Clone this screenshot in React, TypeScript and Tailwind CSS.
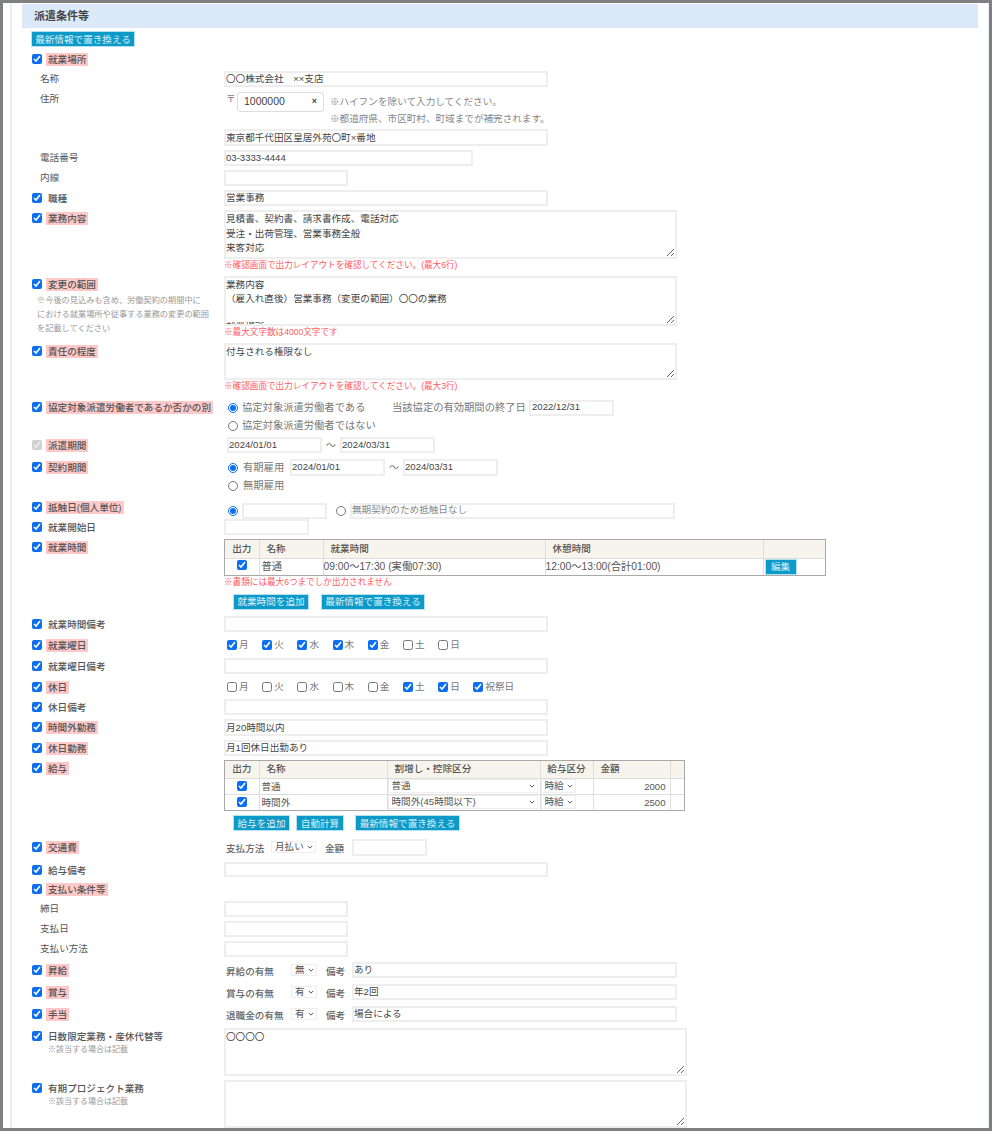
import React from "react";

const inputBase =
  "block border-2 border-[#eeeeee] bg-white px-0 text-[9.6px] text-[#444444] outline-none";
const redNote = "text-[8.6px] leading-[12px] text-[#ff5a5f]";
const grayText = "text-[10.3px] leading-[14px] text-[#777777]";

const Field = ({ className, value = "" }: { className: string; value?: string }) => (
  <input type="text" defaultValue={value} className={`${inputBase} pb-[2px] ${className}`} />
);

const Area = ({ className, value = "" }: { className: string; value?: string }) => (
  <textarea defaultValue={value} className={`${inputBase} overflow-hidden ${className}`} />
);

const Btn = ({ className = "", children }: { className?: string; children: React.ReactNode }) => (
  <button
    type="button"
    className={`h-[16px] border border-[#b5e2f2] bg-[#0d9ac9] text-center text-[9.6px] leading-[13px] text-[#d9eff7] ${className}`}
  >
    {children}
  </button>
);

const Check = ({ on = true, disabled = false }: { on?: boolean; disabled?: boolean }) => (
  <input
    type="checkbox"
    defaultChecked={on}
    disabled={disabled}
    className="m-0 h-[10px] w-[10px] shrink-0 accent-[#0b6ff0]"
  />
);

const Radio = ({ on = false }: { on?: boolean }) => (
  <input
    type="radio"
    defaultChecked={on}
    className="m-0 h-[10px] w-[10px] shrink-0 accent-[#0b6ff0]"
  />
);

// row height comes from the caller so every row lands where the form has it
const Row = ({
  h,
  label,
  pink = false,
  sub = false,
  disabled = false,
  note,
  children,
}: {
  h: string;
  label: string;
  pink?: boolean;
  sub?: boolean;
  disabled?: boolean;
  note?: React.ReactNode;
  children?: React.ReactNode;
}) => (
  <div className={`flex ${h}`}>
    <div className="w-[192px] shrink-0">
      {sub ? (
        <div className="flex h-[16px] items-center pl-[8px] text-[9.6px] text-[#555555]">{label}</div>
      ) : (
        <div className="flex h-[16px] items-center">
          <Check disabled={disabled} />
          <span
            className={`ml-[4px] px-[2px] text-[9.6px] font-medium leading-[13px] text-[#555555] ${
              pink ? "bg-[#ffc9c9]" : ""
            }`}
          >
            {label}
          </span>
        </div>
      )}
      {note}
    </div>
    <div className="min-w-0 flex-1">{children}</div>
  </div>
);

const Days = ({ checked }: { checked: string[] }) => {
  const days = ["月", "火", "水", "木", "金", "土", "日"];
  return (
    <div className="flex h-[16px] items-center pl-[3px] pt-[1px]">
      {days.map((d) => (
        <label key={d} className="flex w-[35.2px] items-center gap-[2px] text-[9.6px] text-[#777777]">
          <Check on={checked.includes(d)} />
          {d}
        </label>
      ))}
      {checked.includes("祝祭日") && (
        <label className="flex items-center gap-[2px] text-[9.6px] text-[#777777]">
          <Check />
          祝祭日
        </label>
      )}
    </div>
  );
};

const Sel = ({ className, value, options }: { className: string; value: string; options: string[] }) => (
  <div className={`relative ${className}`}>
    <select
      defaultValue={value}
      className="block h-full w-full appearance-none border border-[#eeeeee] bg-white py-0 pl-[3px] pr-0 text-[9.6px] leading-[10px] text-[#555555] outline-none"
    >
      {options.map((o) => (
        <option key={o}>{o}</option>
      ))}
    </select>
    <svg
      viewBox="0 0 8 5"
      className="pointer-events-none absolute right-[3px] top-1/2 h-[4px] w-[6px] -translate-y-1/2"
      fill="none"
      stroke="#444444"
      strokeWidth="1.2"
    >
      <path d="M1 1l3 3 3-3" />
    </svg>
  </div>
);

const Th = ({ className = "", children }: { className?: string; children?: React.ReactNode }) => (
  <th
    className={`whitespace-nowrap border border-[#dddddd] bg-[#f7f4ee] text-[9.6px] font-medium text-[#555555] ${className}`}
  >
    {children}
  </th>
);

const thLeft = "px-[7px] text-left";
const tdCls = "border border-[#dddddd] p-0 text-[10.3px] text-[#555555] whitespace-nowrap";

const WorkTable = () => (
  <div className="w-[602px] border border-[#a9a9a9]">
    <table className="w-full table-fixed border-collapse border-hidden">
      <colgroup>
        <col className="w-[34px]" />
        <col className="w-[64px]" />
        <col className="w-[222px]" />
        <col className="w-[218px]" />
        <col className="w-[62px]" />
      </colgroup>
      <thead>
        <tr className="h-[18px]">
          <Th className="px-0 text-center">出力</Th>
          <Th className={thLeft}>名称</Th>
          <Th className={thLeft}>就業時間</Th>
          <Th className={thLeft}>休憩時間</Th>
          <Th />
        </tr>
      </thead>
      <tbody>
        <tr className="h-[16px]">
          <td className={tdCls}>
            <div className="flex justify-center pb-[3px]">
              <Check />
            </div>
          </td>
          <td className={`${tdCls} pl-[2px]`}>普通</td>
          <td className={tdCls}>09:00～17:30 (実働07:30)</td>
          <td className={tdCls}>12:00～13:00(合計01:00)</td>
          <td className={tdCls}>
            <Btn className="ml-[1px] block w-[32px]">編集</Btn>
          </td>
        </tr>
      </tbody>
    </table>
  </div>
);

const PayRow = ({ name, kind, amount }: { name: string; kind: string; amount: string }) => (
  <tr className="h-[16px]">
    <td className={tdCls}>
      <div className="flex justify-center">
        <Check />
      </div>
    </td>
    <td className={tdCls}>
      <input
        type="text"
        defaultValue={name}
        className="block h-[15px] w-[125px] bg-white px-[2px] text-[9.6px] text-[#555555] outline-none"
      />
    </td>
    <td className={tdCls}>
      <Sel className="h-[14px] w-[150px]" value={kind} options={["普通", "時間外(45時間以下)"]} />
    </td>
    <td className={tdCls}>
      <Sel className="h-[14px] w-[35px]" value="時給" options={["時給", "日給", "月給"]} />
    </td>
    <td className={tdCls}>
      <input
        type="text"
        defaultValue={amount}
        className="block h-[15px] w-[74px] bg-white px-[2px] text-right text-[9.6px] text-[#555555] outline-none"
      />
    </td>
    <td className={tdCls} />
  </tr>
);

const PayTable = () => (
  <div className="w-[461px] border border-[#a9a9a9]">
    <table className="w-full table-fixed border-collapse border-hidden">
      <colgroup>
        <col className="w-[34px]" />
        <col className="w-[128px]" />
        <col className="w-[153px]" />
        <col className="w-[53px]" />
        <col className="w-[77px]" />
        <col className="w-[14px]" />
      </colgroup>
      <thead>
        <tr className="h-[17px]">
          <Th className="px-0 text-center">出力</Th>
          <Th className={thLeft}>名称</Th>
          <Th className={thLeft}>割増し・控除区分</Th>
          <Th className="px-0 text-center">給与区分</Th>
          <Th className={thLeft}>金額</Th>
          <Th />
        </tr>
      </thead>
      <tbody>
        <PayRow name="普通" kind="普通" amount="2000" />
        <PayRow name="時間外" kind="時間外(45時間以下)" amount="2500" />
      </tbody>
    </table>
  </div>
);

const Flag = ({ label, value, note }: { label: string; value: string; note: string }) => (
  <div className="flex items-start">
    <span className="mt-[4px] w-[65px] text-[9.6px] font-medium leading-[12px] text-[#666666]">{label}</span>
    <Sel className="mt-[2px] h-[12px] w-[26px]" value={value} options={["無", "有"]} />
    <span className="ml-[9px] mt-[4px] w-[26px] text-[9.6px] font-medium leading-[12px] text-[#666666]">備考</span>
    <Field className="h-[16px] w-[325px]" value={note} />
  </div>
);

const longNote = [
  "※今後の見込みも含め、労働契約の期間中に",
  "における就業場所や従事する業務の変更の範囲",
  "を記載してください",
];

export default function App() {
  return (
    <div
      className="h-[1131px] w-[992px] overflow-hidden border-[3px] border-[#808080] bg-white pl-[7px]"
      style={{ fontFamily: '"Liberation Sans", "Noto Sans CJK JP", sans-serif' }}
    >
      <div className="h-full border-l-2 border-r border-[#e8f0fb] pl-[10px] pr-[10px] pt-[1px]">
        <div className="flex h-[24px] items-center bg-[#dbe9f8] pl-[12px] text-[11px] font-bold text-[#444444]">
          派遣条件等
        </div>
        <Btn className="ml-[9px] mt-[3px] block w-[104px]">最新情報で置き換える</Btn>

        <div className="mt-[4px] pl-[10px]">
          <Row h="h-[20px]" label="就業場所" pink />
          <Row h="h-[20px]" label="名称" sub>
            <Field className="h-[16px] w-[324px]" value="〇〇株式会社　××支店" />
          </Row>
          <Row h="h-[38px]" label="住所" sub>
            <div className="flex items-start">
              <span className="ml-[2px] mt-[1px] w-[11px] text-[9.6px] text-[#777777]">〒</span>
              <div className="mt-[1px] flex h-[20px] w-[87px] items-center justify-between rounded-[3px] border border-[#dddddd] pl-[6px] pr-[6px] text-[10.5px] text-[#444444]">
                <span>1000000</span>
                <span className="text-[9px] font-bold">×</span>
              </div>
              <div className="ml-[6px] pt-[2px] text-[9.6px] leading-[17px] text-[#888888]">
                <div>※ハイフンを除いて入力してください。</div>
                <div>※都道府県、市区町村、町域までが補完されます。</div>
              </div>
            </div>
          </Row>
          <div className="flex h-[21px]">
            <div className="w-[192px] shrink-0" />
            <Field className="h-[17px] w-[324px]" value="東京都千代田区皇居外苑〇町×番地" />
          </div>
          <Row h="h-[20px]" label="電話番号" sub>
            <Field className="h-[16px] w-[249px]" value="03-3333-4444" />
          </Row>
          <Row h="h-[20px]" label="内線" sub>
            <Field className="h-[16px] w-[124px]" />
          </Row>
          <Row h="h-[20px]" label="職種">
            <Field className="h-[16px] w-[324px]" value="営業事務" />
          </Row>
          <Row h="h-[66px]" label="業務内容" pink>
            <Area
              className="h-[49px] w-[453px] leading-[14.7px]"
              value={"見積書、契約書、請求書作成、電話対応\n受注・出荷管理、営業事務全般\n来客対応"}
            />
            <div className={redNote}>※確認画面で出力レイアウトを確認してください。(最大6行)</div>
          </Row>
          <Row
            h="h-[67px]"
            label="変更の範囲"
            pink
            note={
              <div className="mt-[2px] whitespace-nowrap pl-[5px] text-[8.2px] leading-[14px] text-[#999999]">
                {longNote.map((l) => (
                  <div key={l}>{l}</div>
                ))}
              </div>
            }
          >
            <Area
              className="h-[50px] w-[453px] leading-[14px]"
              value={"業務内容\n（雇入れ直後）営業事務（変更の範囲）〇〇の業務\n\n就業場所"}
            />
            <div className={redNote}>※最大文字数は4000文字です</div>
          </Row>
          <Row h="h-[56px]" label="責任の程度" pink>
            <Area className="h-[37px] w-[453px] leading-[14.7px]" value="付与される権限なし" />
            <div className={redNote}>※確認画面で出力レイアウトを確認してください。(最大3行)</div>
          </Row>
          <Row h="h-[38px]" label="協定対象派遣労働者であるか否かの別" pink>
            <div className={`flex h-[17px] items-center pl-[4px] ${grayText}`}>
              <Radio on />
              <span className="ml-[4px] w-[150px]">協定対象派遣労働者である</span>
              <span className="w-[137px]">当該協定の有効期間の終了日</span>
              <Field className="h-[16px] w-[85px] pl-[1px]" value="2022/12/31" />
            </div>
            <div className={`mt-[1px] flex h-[17px] items-center pl-[4px] ${grayText}`}>
              <Radio />
              <span className="ml-[4px]">協定対象派遣労働者ではない</span>
            </div>
          </Row>
          <Row h="h-[22px]" label="派遣期間" pink disabled>
            <div className="flex items-center pl-[3px]">
              <Field className="h-[16px] w-[95px]" value="2024/01/01" />
              <span className="w-[18px] text-center text-[10px] text-[#777777]">～</span>
              <Field className="h-[16px] w-[95px]" value="2024/03/31" />
            </div>
          </Row>
          <Row h="h-[40px]" label="契約期間" pink>
            <div className={`flex items-center pl-[4px] ${grayText}`}>
              <Radio on />
              <span className="ml-[5px] w-[47px]">有期雇用</span>
              <Field className="h-[17px] w-[95px]" value="2024/01/01" />
              <span className="w-[18px] text-center text-[10px]">～</span>
              <Field className="h-[17px] w-[95px]" value="2024/03/31" />
            </div>
            <div className={`mt-[1px] flex h-[17px] items-center pl-[4px] ${grayText}`}>
              <Radio />
              <span className="ml-[5px]">無期雇用</span>
            </div>
          </Row>
          <Row h="h-[20px]" label="抵触日(個人単位)" pink>
            <div className="flex items-center pl-[4px]">
              <Radio on />
              <Field className="ml-[4px] h-[16px] w-[85px]" />
              <div className="ml-[9px]">
                <Radio />
              </div>
              <div className="ml-[4px] flex h-[16px] w-[325px] items-center border-2 border-[#eeeeee] pb-[2px] text-[9.6px] text-[#888888]">
                無期契約のため抵触日なし
              </div>
            </div>
          </Row>
          <Row h="h-[20px]" label="就業開始日">
            <Field className="h-[16px] w-[85px]" />
          </Row>
          <Row h="h-[77px]" label="就業時間" pink>
            <WorkTable />
            <div className={redNote}>※書類には最大6つまでしか出力されません</div>
            <div className="ml-[9px] mt-[6px] flex gap-[12px]">
              <Btn className="w-[76px]">就業時間を追加</Btn>
              <Btn className="w-[104px]">最新情報で置き換える</Btn>
            </div>
          </Row>
          <Row h="h-[21px]" label="就業時間備考">
            <Field className="h-[16px] w-[324px]" />
          </Row>
          <Row h="h-[21px]" label="就業曜日" pink>
            <Days checked={["月", "火", "水", "木", "金"]} />
          </Row>
          <Row h="h-[21px]" label="就業曜日備考">
            <Field className="h-[16px] w-[324px]" />
          </Row>
          <Row h="h-[20px]" label="休日" pink>
            <Days checked={["土", "日", "祝祭日"]} />
          </Row>
          <Row h="h-[20px]" label="休日備考">
            <Field className="h-[16px] w-[324px]" />
          </Row>
          <Row h="h-[21px]" label="時間外勤務" pink>
            <Field className="h-[17px] w-[324px]" value="月20時間以内" />
          </Row>
          <Row h="h-[20px]" label="休日勤務" pink>
            <Field className="h-[16px] w-[324px]" value="月1回休日出勤あり" />
          </Row>
          <Row h="h-[79px]" label="給与" pink>
            <PayTable />
            <div className="ml-[9px] mt-[4px] flex">
              <Btn className="w-[57px]">給与を追加</Btn>
              <Btn className="ml-[6px] w-[48px]">自動計算</Btn>
              <Btn className="ml-[11px] w-[105px]">最新情報で置き換える</Btn>
            </div>
          </Row>
          <Row h="h-[23px]" label="交通費" pink>
            <div className="flex items-start pl-[2px]">
              <span className="mt-[4px] w-[45px] text-[9.6px] font-medium leading-[12px] text-[#666666]">支払方法</span>
              <Sel className="mt-[2px] h-[12px] w-[45px]" value="月払い" options={["月払い", "日払い"]} />
              <span className="ml-[9px] mt-[4px] w-[27px] text-[9.6px] font-medium leading-[12px] text-[#666666]">金額</span>
              <Field className="h-[17px] w-[75px]" />
            </div>
          </Row>
          <Row h="h-[19px]" label="給与備考">
            <Field className="h-[15px] w-[324px]" />
          </Row>
          <Row h="h-[20px]" label="支払い条件等" pink />
          <Row h="h-[20px]" label="締日" sub>
            <Field className="h-[16px] w-[124px]" />
          </Row>
          <Row h="h-[20px]" label="支払日" sub>
            <Field className="h-[16px] w-[124px]" />
          </Row>
          <Row h="h-[21px]" label="支払い方法" sub>
            <Field className="h-[16px] w-[124px]" />
          </Row>
          <Row h="h-[22px]" label="昇給" pink>
            <div className="pl-[2px]">
              <Flag label="昇給の有無" value="無" note="あり" />
            </div>
          </Row>
          <Row h="h-[22px]" label="賞与" pink>
            <div className="pl-[2px]">
              <Flag label="賞与の有無" value="有" note="年2回" />
            </div>
          </Row>
          <Row h="h-[22px]" label="手当" pink>
            <div className="pl-[2px]">
              <Flag label="退職金の有無" value="有" note="場合による" />
            </div>
          </Row>
          <Row
            h="h-[52px]"
            label="日数限定業務・産休代替等"
            note={<div className="pl-[16px] text-[8px] leading-[12px] text-[#999999]">※該当する場合は記載</div>}
          >
            <Area className="h-[48px] w-[463px] leading-[14.7px]" value="〇〇〇〇" />
          </Row>
          <Row
            h="h-[52px]"
            label="有期プロジェクト業務"
            note={<div className="pl-[16px] text-[8px] leading-[12px] text-[#999999]">※該当する場合は記載</div>}
          >
            <Area className="h-[48px] w-[463px] leading-[14.7px]" />
          </Row>
        </div>
      </div>
    </div>
  );
}
